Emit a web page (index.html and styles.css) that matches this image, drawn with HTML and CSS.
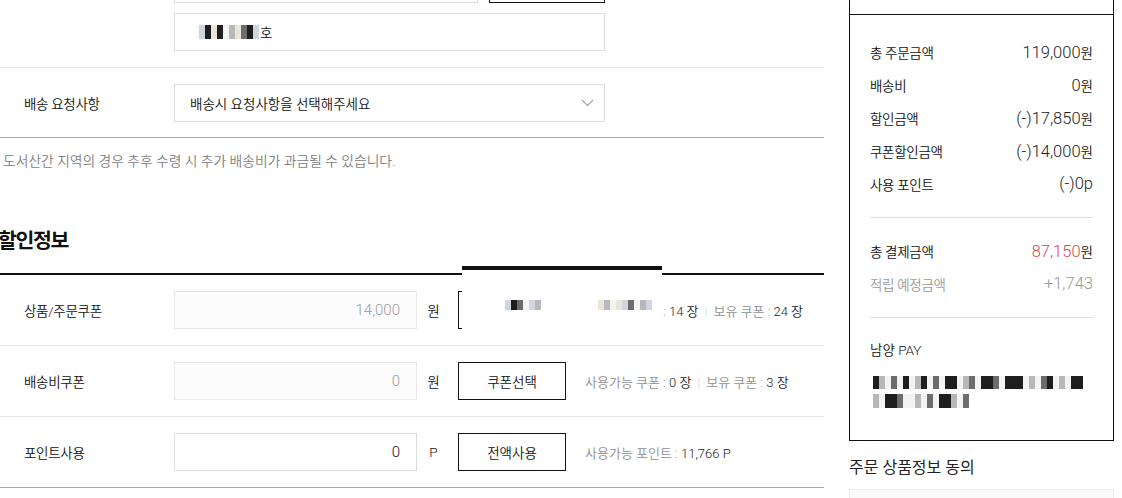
FILE: index.html
```html
<!DOCTYPE html>
<html lang="ko">
<head>
<meta charset="utf-8">
<title>주문서 작성</title>
<link rel="stylesheet" href="styles.css">
</head>
<body>
<div class="page">
  <main class="main">
    <section class="addr">
      <div class="addr-line">
        <div class="field field-short"></div>
        <button class="btn btn-zip" type="button" aria-label="우편번호 찾기"></button>
      </div>
      <div class="field field-long">
        <span class="mz mz-addr"><i class="m m4"></i><i class="m m1"></i><i class="m m5"></i><i class="m m1"></i><i class="m m0"></i><i class="m m3"></i><i class="m m5"></i><i class="m m2"></i><i class="m m1"></i><i class="m m4"></i></span><span class="addr-tail">호</span>
      </div>
    </section>

    <section class="req">
      <span class="label">배송 요청사항</span>
      <div class="select">
        <span class="select-text">배송시 요청사항을 선택해주세요</span>
        <svg class="chev" width="13" height="8" viewBox="0 0 13 8"><polyline points="1,1 6.5,6.5 12,1" fill="none" stroke="#a0a0a0" stroke-width="1.1"/></svg>
      </div>
    </section>

    <p class="notice">도서산간 지역의 경우 추후 수령 시 추가 배송비가 과금될 수 있습니다.</p>

    <h2 class="title">할인정보</h2>

    <div class="discount">
      <div class="row">
        <div class="row-label">상품/주문쿠폰</div>
        <div class="amount is-disabled"><span class="num">14,000</span></div>
        <span class="unit">원</span>
        <button class="btn btn-sm" type="button">쿠폰선택</button>
        <p class="info">사용가능 쿠폰 : <b>14 장</b><span class="sep">|</span>보유 쿠폰 : <b>24 장</b></p>
      </div>
      <div class="row">
        <div class="row-label">배송비쿠폰</div>
        <div class="amount is-disabled"><span class="num">0</span></div>
        <span class="unit">원</span>
        <button class="btn btn-sm" type="button">쿠폰선택</button>
        <p class="info">사용가능 쿠폰 : <b>0 장</b><span class="sep">|</span>보유 쿠폰 : <b>3 장</b></p>
      </div>
      <div class="row row-last">
        <div class="row-label">포인트사용</div>
        <div class="amount"><span class="num">0</span></div>
        <span class="unit">P</span>
        <button class="btn btn-sm" type="button">전액사용</button>
        <p class="info">사용가능 포인트 : <b>11,766 P</b></p>
      </div>

      <div class="mask">
        <span class="mz mz-a"><i class="m m4"></i><i class="m m1"></i><i class="m m2"></i><i class="m m0"></i><i class="m m4"></i><i class="m m3"></i></span>
        <span class="mz mz-b"><i class="m m5"></i><i class="m m3"></i><i class="m m0"></i><i class="m m5"></i><i class="m m4"></i><i class="m m2"></i><i class="m m0"></i><i class="m m3"></i><i class="m m4"></i></span>
      </div>
    </div>
  </main>

  <aside class="side">
    <div class="side-prev"></div>
    <div class="summary">
      <dl class="sum-list">
        <div class="sum-row"><dt>총 주문금액</dt><dd><span class="num">119,000</span><span class="won">원</span></dd></div>
        <div class="sum-row"><dt>배송비</dt><dd><span class="num">0</span><span class="won">원</span></dd></div>
        <div class="sum-row"><dt>할인금액</dt><dd><span class="num">(-)17,850</span><span class="won">원</span></dd></div>
        <div class="sum-row"><dt>쿠폰할인금액</dt><dd><span class="num">(-)14,000</span><span class="won">원</span></dd></div>
        <div class="sum-row"><dt>사용 포인트</dt><dd><span class="num">(-)0p</span></dd></div>
      </dl>
      <hr class="sum-hr">
      <dl class="sum-list">
        <div class="sum-row"><dt>총 결제금액</dt><dd><span class="num total">87,150</span><span class="won">원</span></dd></div>
        <div class="sum-row is-muted"><dt>적립 예정금액</dt><dd><span class="num">+1,743</span></dd></div>
      </dl>
      <hr class="sum-hr">
      <div class="pay">
        <p class="pay-title">남양 PAY</p>
        <div class="mz mz-line l1"><i class="m m1"></i><i class="m m3"></i><i class="m m0"></i><i class="m m2"></i><i class="m m0"></i><i class="m m1"></i><i class="m m0"></i><i class="m m3"></i><i class="m m1"></i><i class="m m0"></i><i class="m m2"></i><i class="m m0"></i><i class="m m1"></i><i class="m m1"></i><i class="m m0"></i><i class="m m3"></i><i class="m m2"></i><i class="m m0"></i><i class="m m1"></i><i class="m m1"></i><i class="m m2"></i><i class="m m0"></i><i class="m m1"></i><i class="m m1"></i><i class="m m1"></i><i class="m m0"></i><i class="m m3"></i><i class="m m0"></i><i class="m m2"></i><i class="m m1"></i><i class="m m0"></i><i class="m m3"></i><i class="m m0"></i><i class="m m1"></i><i class="m m1"></i></div>
        <div class="mz mz-line l2"><i class="m m3"></i><i class="m m0"></i><i class="m m1"></i><i class="m m1"></i><i class="m m2"></i><i class="m m0"></i><i class="m m0"></i><i class="m m3"></i><i class="m m0"></i><i class="m m2"></i><i class="m m0"></i><i class="m m1"></i><i class="m m1"></i><i class="m m3"></i><i class="m m0"></i><i class="m m2"></i></div>
      </div>
    </div>
    <h3 class="agree-title">주문 상품정보 동의</h3>
    <div class="agree-box"></div>
  </aside>
</div>
</body>
</html>
```

FILE: styles.css
```css
* { box-sizing: border-box; margin: 0; padding: 0; }

html, body {
  width: 1122px;
  height: 498px;
  overflow: hidden;
  background: #fff;
}

body {
  font-family: "Roboto", "Noto Sans CJK KR", "Noto Sans", sans-serif;
  font-size: 13px;
  font-weight: 350;
  color: #222;
}

.page {
  display: flex;
  align-items: flex-start;
  gap: 25px;
  margin-top: -35px;
}

/* ---------- left column ---------- */
.main { width: 824px; flex: none; }

.addr {
  display: flex;
  flex-direction: column;
  gap: 10px;
  padding: 0 0 16px 174px;
  border-bottom: 1px solid #e6e6e6;
}
.addr-line { display: flex; gap: 11px; }

.field {
  height: 38px;
  border: 1px solid #dcdcdc;
  background: #fff;
  display: flex;
  align-items: center;
  padding: 0 16px;
}
.field-short { width: 304px; }
.field-long { width: 431px; padding-left: 24px; }
.addr-tail { color: #111; font-size: 13.5px; }

.btn {
  height: 38px;
  border: 1px solid #111;
  background: #fff;
  font: inherit;
  color: #111;
  cursor: pointer;
}
.btn-zip { width: 116px; }
.btn-sm { width: 108px; margin-left: 8px; font-size: 13.5px; }

.req {
  display: flex;
  align-items: center;
  padding: 16px 0 15px;
  border-bottom: 1px solid #a9a9a9;
}
.label {
  width: 174px;
  padding-left: 24px;
  color: #111;
  font-size: 13.5px;
  letter-spacing: -0.3px;
}
.select {
  width: 431px;
  height: 38px;
  border: 1px solid #dcdcdc;
  display: flex;
  align-items: center;
  justify-content: space-between;
  padding: 0 10px 0 15px;
  color: #111;
}
.select-text { font-size: 13.5px; }
.chev { display: block; }

.notice {
  margin-top: 14px;
  padding-left: 3px;
  font-size: 13.8px;
  line-height: 18px;
  color: #808080;
}

.title {
  margin: 57px 0 18px -2px;
  font-size: 20.5px;
  line-height: 28px;
  font-weight: 700;
  letter-spacing: -1.4px;
  color: #111;
}

.discount {
  position: relative;
  border-top: 2px solid #111;
}
.row {
  display: flex;
  align-items: center;
  height: 71px;
  border-bottom: 1px solid #e6e6e6;
}
.row-last { border-bottom-color: #a9a9a9; }
.row-label {
  width: 174px;
  padding-left: 24px;
  color: #111;
  font-size: 13.5px;
  letter-spacing: -0.3px;
}
.amount {
  width: 243px;
  height: 38px;
  border: 1px solid #dcdcdc;
  background: #fff;
  display: flex;
  align-items: center;
  justify-content: flex-end;
  padding-right: 16px;
  color: #111;
}
.amount .num { font-size: 15px; }
.amount.is-disabled {
  background: #fbfbfb;
  border-color: #e8e8e8;
  color: #9c9c9c;
}
.unit {
  width: 33px;
  text-align: center;
  color: #111;
  font-size: 13.5px;
}
.info {
  margin-left: 19px;
  color: #909090;
}
.info b { font-weight: 350; color: #222; }
.sep { color: #d5d5d5; margin: 0 6px; }

/* masked area over the first coupon button */
.mask {
  position: absolute;
  left: 462px;
  top: -9px;
  width: 200px;
  height: 66px;
  background: #fff;
  border-top: 4px solid #111;
}
.mz { display: inline-flex; vertical-align: middle; }
.m { display: block; width: 6px; height: 100%; }
.m0 { background: #f3f3f3; }
.m1 { background: #1e1e1e; }
.m2 { background: #6c6c6c; }
.m3 { background: #b8b8b8; }
.m4 { background: #cfd6e0; }
.m5 { background: #ebe5d8; }

.mz-addr { height: 14px; margin-right: 1px; }
.mask .mz { position: absolute; top: 30px; height: 10px; }
.mz-a { left: 43px; }
.mz-b { left: 136px; }

/* ---------- right column ---------- */
.side { width: 265px; flex: none; }

.side-prev {
  height: 49px;
  border-left: 1px solid #111;
  border-right: 1px solid #111;
}

.summary {
  border: 1px solid #111;
  padding: 20px 20px 32px;
}
.sum-row {
  display: flex;
  justify-content: space-between;
  align-items: center;
  height: 33px;
  color: #111;
  font-size: 13.5px;
  letter-spacing: -0.3px;
}
.sum-row dd { display: flex; align-items: baseline; letter-spacing: 0; }
.sum-row .num { font-size: 16.5px; color: #222; }
.sum-row .won { font-size: 13.5px; color: #111; }
.sum-row .num.total { color: #e0474f; }
.sum-row.is-muted dt,
.sum-row.is-muted .num { color: #999; }

.sum-hr {
  border: 0;
  border-top: 1px solid #dedede;
  margin: 17px 0 16px;
}

.pay-title {
  line-height: 33px;
  color: #111;
  font-size: 13.5px;
}
.mz-line { display: flex; }
.mz-line.l1 { height: 13px; margin-top: 9px; margin-left: 3px; }
.mz-line.l2 { height: 14px; margin-top: 5px; margin-left: 3px; }

.agree-title {
  margin: 15px 0 9px;
  font-size: 16px;
  line-height: 24px;
  font-weight: 400;
  color: #222;
}
.agree-box {
  height: 60px;
  border: 1px solid #ebebeb;
  background: #fafafa;
}
```
